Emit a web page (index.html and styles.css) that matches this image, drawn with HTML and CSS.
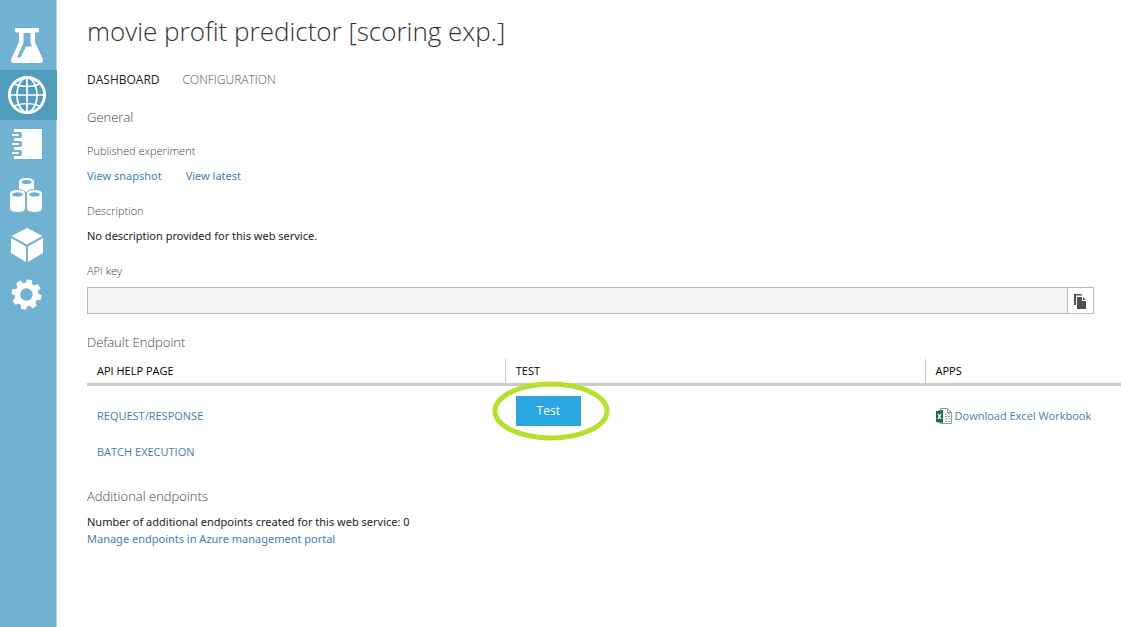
FILE: index.html
```html
<!DOCTYPE html>
<html lang="en">
<head>
<meta charset="utf-8">
<title>movie profit predictor [scoring exp.]</title>
<link rel="stylesheet" href="styles.css">
</head>
<body>
<div class="app">
  <nav class="sidebar" aria-label="Workspace">
    <a class="nav-item" href="#experiments" aria-label="Experiments">
      <svg viewBox="0 0 56 50"><path fill="#fff" fill-rule="evenodd" d="M16.500 8h21q1.500 0 1.500 1.300v2q0 1.200-1.500 1.200H35V22l7.500 16.500q1.500 4.500-2.500 4.500H14q-4 0-2.500-4.500L19 22v-9.500h-2.500Q15 12.500 15 11.300v-2Q15 8 16.500 8zM23.500 13v10L17 37.500h3.500L26 26.500h6L30.500 23V13z"/></svg>
    </a>
    <a class="nav-item nav-current" href="#services" aria-label="Web services" aria-current="page">
      <svg viewBox="0 0 56 50" fill="none" stroke="#fff" stroke-width="1.700"><circle cx="27" cy="25" r="17.600" stroke-width="3"/><ellipse cx="27" cy="25" rx="10" ry="17"/><path d="M27 8v34M10 25h34M14 14q13 5 26 0M14 36q13-5 26 0"/></svg>
    </a>
    <a class="nav-item" href="#notebooks" aria-label="Notebooks">
      <svg viewBox="0 0 56 50"><path fill="#fff" d="M14 9h28v30H14z"/><path fill="#71b1d1" d="M12 12h8q2 0 2 3t-2 3h-8zM12 21h8q2 0 2 3t-2 3h-8zM12 30h8q2 0 2 3t-2 3h-8z"/><path fill="#fff" d="M12 14h6q1 0 1 1t-1 1h-6zM12 23h6q1 0 1 1t-1 1h-6zM12 32h6q1 0 1 1t-1 1h-6z"/></svg>
    </a>
    <a class="nav-item" href="#datasets" aria-label="Datasets">
      <svg viewBox="0 0 56 50" fill="#fff"><path d="M19 12q0-4 7.500-4t7.500 4v10H19z"/><g stroke="#71b1d1" stroke-width="1"><path id="can" d="M9.500 24q0-4.500 8-4.500t8 4.500v14q0 4.500-8 4.500t-8-4.500z"/><use href="#can" x="17"/></g><g fill="#71b1d1" stroke="none"><ellipse cx="26.500" cy="12" rx="5" ry="2"/><ellipse cx="17.500" cy="24.500" rx="5.500" ry="2.200"/><ellipse cx="34.500" cy="24.500" rx="5.500" ry="2.200"/></g></svg>
    </a>
    <a class="nav-item" href="#models" aria-label="Trained models">
      <svg viewBox="0 0 56 50" fill="#fff"><path d="M27 8l15.500 8L27 24.500 11.500 16zM11 18l15 8.500V42L11 33zM43 18l-15 8.500V42l15-9z"/></svg>
    </a>
    <a class="nav-item" href="#settings" aria-label="Settings">
      <svg viewBox="0 0 56 50"><g transform="translate(26.500 24.500) rotate(12)"><circle r="9" fill="none" stroke="#fff" stroke-width="5.500"/><g fill="#fff"><path id="tooth" d="M-3.500-10.500l1-4.500h5l1 4.500z"/><use href="#tooth" transform="rotate(45)"/><use href="#tooth" transform="rotate(90)"/><use href="#tooth" transform="rotate(135)"/><use href="#tooth" transform="rotate(180)"/><use href="#tooth" transform="rotate(225)"/><use href="#tooth" transform="rotate(270)"/><use href="#tooth" transform="rotate(315)"/></g></g></svg>
    </a>
  </nav>

  <main class="content">
    <h1 class="title">movie profit predictor [scoring exp.]</h1>
    <nav class="tabs" aria-label="Service pages">
      <a class="tab tab-current" href="#dashboard" aria-current="page">DASHBOARD</a>
      <a class="tab" href="#configuration">CONFIGURATION</a>
    </nav>

    <section class="general">
      <h2 class="heading">General</h2>
      <div class="field">
        <h3 class="label">Published experiment</h3>
        <div class="links">
          <a href="#snapshot">View snapshot</a>
          <a href="#latest">View latest</a>
        </div>
      </div>
      <div class="field">
        <h3 class="label">Description</h3>
        <p class="text">No description provided for this web service.</p>
      </div>
      <div class="field">
        <label class="label" for="api-key">API key</label>
        <div class="key-row">
          <input class="key-input" id="api-key" type="text" readonly>
          <button class="copy" type="button" aria-label="Copy API key">
            <svg viewBox="0 0 14 16" width="14" height="16"><path fill="#505050" d="M0 1h7l1.500 1.500H2V12H0zM3 4h5v4h4v8H3zM9 4l3 3H9z"/></svg>
          </button>
        </div>
      </div>
    </section>

    <section class="endpoint">
      <h2 class="heading">Default Endpoint</h2>
      <table class="endpoints">
        <thead>
          <tr><th class="col-help" scope="col">API HELP PAGE</th><th class="col-test" scope="col">TEST</th><th class="col-apps" scope="col">APPS</th></tr>
        </thead>
        <tbody>
          <tr class="row-request">
            <td><a href="#request">REQUEST/RESPONSE</a></td>
            <td class="test-cell">
              <div class="test-wrap">
                <button class="test" type="button">Test</button>
                <svg class="ring" viewBox="0 0 118 60" width="118" height="60"><ellipse cx="59" cy="30" rx="56" ry="27" fill="none" stroke="#b5e02e" stroke-width="5"/></svg>
              </div>
            </td>
            <td><a class="download" href="#workbook"><svg viewBox="0 0 16 16" width="16" height="16"><path fill="#fff" stroke="#999" d="M4.500.5h7l4 4v11h-11z"/><path fill="none" stroke="#999" d="M11.500.5v4h4"/><path stroke="#7aa98f" stroke-width="1.200" stroke-dasharray="2 1" d="M9 6h5M9 8.500h5M9 11h5M9 13.500h5"/><path fill="#1e7145" d="M0 3l7-1v13l-7-1z"/><path stroke="#fff" stroke-width="1.400" d="M2 6l3 5M5 6l-3 5"/></svg>Download Excel Workbook</a></td>
          </tr>
          <tr class="row-batch">
            <td><a href="#batch">BATCH EXECUTION</a></td><td></td><td></td>
          </tr>
        </tbody>
      </table>
    </section>

    <section class="additional">
      <h2 class="heading">Additional endpoints</h2>
      <p class="text compact">Number of additional endpoints created for this web service: 0</p>
      <a class="compact" href="#manage">Manage endpoints in Azure management portal</a>
    </section>
  </main>
</div>
</body>
</html>
```
FILE: styles.css
```css
* { box-sizing: border-box; }
body {
  margin: 0;
  background: #fff;
  color: #222;
  font: 11px/20px "Noto Sans", "Open Sans", sans-serif;
}
h1, h2, h3, p { margin: 0; }
a { color: #3f7fae; text-decoration: none; }

.app { display: flex; min-height: 100vh; }
.sidebar {
  flex: none;
  width: 57px;
  padding-top: 20px;
  background: #71b1d1;
  border-right: 1px solid #c3d3dd;
}
.nav-item { display: block; height: 50px; margin-right: -1px; }
.nav-item svg { display: block; width: 56px; height: 50px; }
.nav-current { background: #519bbd; }

.content { flex: 1; min-width: 0; padding: 11px 0 24px 30px; }
.title, .tabs, .heading, .label, .endpoints, .test { font-family: "Open Sans", "Noto Sans", sans-serif; }
.title { font-size: 26px; line-height: 40px; font-weight: 300; color: #333; }
.tabs { display: flex; gap: 23px; margin-top: 19px; font-size: 12px; }
.tab { font-weight: 300; color: #555; }
.tab-current { font-weight: 400; color: #222; }

.general { margin: 17px 27px 0 0; }
.heading { font-size: 13px; font-weight: 300; color: #444; }
.field { margin-top: 15px; }
.heading + .field { margin-top: 14px; }
.label { display: block; font-size: 11px; font-weight: 300; color: #444; }
.links { display: flex; gap: 24px; margin-top: 5px; }
.field .text { margin-top: 5px; }
.key-row { display: flex; height: 27px; margin-top: 6px; border: 1px solid #b9b9b9; }
.key-input { flex: 1; min-width: 0; border: 0; padding: 0 8px; background: #f2f2f2; font: inherit; }
.copy {
  display: flex;
  align-items: center;
  justify-content: center;
  width: 26px;
  padding: 0;
  border: 0;
  border-left: 1px solid #b9b9b9;
  background: #fff;
}

.endpoint { margin-top: 18px; }
.endpoints { width: 100%; margin-top: 7px; border-collapse: separate; border-spacing: 0; table-layout: fixed; }
.endpoints th {
  height: 27px;
  padding: 0 10px;
  border-bottom: 3px solid #cbcbcb;
  font-size: 11px;
  font-weight: 400;
  color: #000;
  text-align: left;
}
.endpoints th + th { border-left: 1px solid #cbcbcb; }
.endpoints td { padding: 8px 10px; vertical-align: top; font-size: 11px; }
.endpoints td + td { padding-left: 11px; }
.endpoints .row-request td { padding-top: 20px; }
.endpoints .row-request .test-cell { padding: 10px 10px 8px 11px; }
.endpoints .row-batch td { padding-bottom: 0; }
.col-help { width: 40.4%; }
.col-test { width: 40.6%; }
.test-wrap { position: relative; width: 65px; }
.test {
  display: block;
  width: 100%;
  height: 30px;
  padding: 0;
  border: 1px solid #3f9bdc;
  background: #29a7e0;
  color: #fff;
  font-size: 12px;
  line-height: 20px;
}
.ring { position: absolute; top: -15px; left: -24px; pointer-events: none; }
.download { display: flex; align-items: center; gap: 3px; white-space: nowrap; }

.additional { margin-top: 24px; }
.additional .text { margin-top: 7px; }
.compact { display: block; line-height: 17px; }
```
